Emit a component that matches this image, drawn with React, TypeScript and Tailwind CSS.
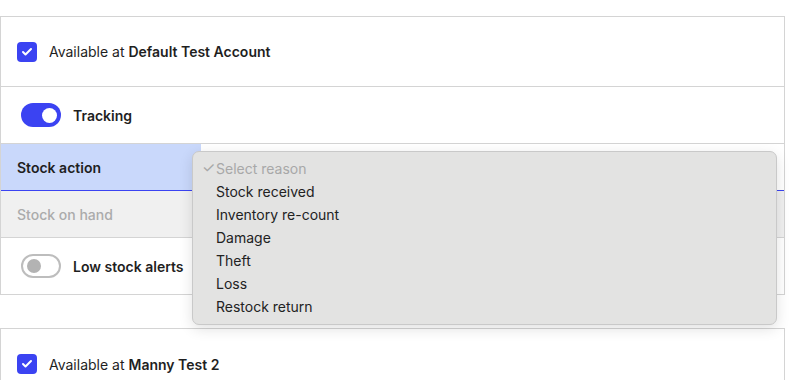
import { Check } from "lucide-react";

function CheckBox() {
  return (
    <span className="flex h-5 w-5 items-center justify-center rounded-[4px] bg-[#3b43f2]">
      <Check className="h-3 w-3 text-white" strokeWidth={4} />
    </span>
  );
}

function Toggle({ on }: { on: boolean }) {
  if (on) {
    return (
      <span className="flex h-6 w-10 items-center justify-end rounded-full bg-[#3b43f2] pr-[4px]">
        <span className="h-[15px] w-[15px] rounded-full bg-white" />
      </span>
    );
  }
  return (
    <span className="flex h-6 w-10 items-center rounded-full border-2 border-[#bdbdbd] bg-white pl-[4px]">
      <span className="h-[14px] w-[14px] rounded-full bg-[#b3b3b3]" />
    </span>
  );
}

const reasons = ["Stock received", "Inventory re-count", "Damage", "Theft", "Loss", "Restock return"];

export default function App() {
  return (
    <div className="relative h-[380px] w-[799px] overflow-hidden bg-white pt-4 text-[14px] text-[#1f1f1f] [font-family:Inter,'Noto_Sans',sans-serif]">
      <div className="w-[785px] border border-[#d4d4d4]">
        <div className="flex h-[70px] items-center gap-3 border-b border-[#d4d4d4] pl-[16px]">
          <CheckBox />
          <span>
            Available at <span className="font-semibold">Default Test Account</span>
          </span>
        </div>
        <div className="flex h-[57px] items-center gap-3 border-b border-[#d4d4d4] pl-[20px]">
          <Toggle on />
          <span className="font-semibold">Tracking</span>
        </div>
        <div className="flex h-[47px] border-b border-[#3b43f2]">
          <div className="flex w-[200px] items-center bg-[#c9d8fb] pl-[16px] font-semibold">Stock action</div>
          <div className="flex-1 bg-white" />
        </div>
        <div className="flex h-[47px] items-center border-b border-[#d4d4d4] bg-[#f0f0f0] pl-[16px] font-medium text-[#ababab]">
          Stock on hand
        </div>
        <div className="flex h-[56px] items-center gap-3 pl-[20px]">
          <Toggle on={false} />
          <span className="font-semibold">Low stock alerts</span>
        </div>
      </div>
      <div className="mt-[33px] h-[80px] w-[785px] border border-[#d4d4d4]">
        <div className="flex h-[70px] items-center gap-3 pl-[16px]">
          <CheckBox />
          <span>
            Available at <span className="font-semibold">Manny Test 2</span>
          </span>
        </div>
      </div>

      <div className="absolute left-[192px] top-[151px] w-[585px] rounded-[7px] border border-[#c9c9c9] bg-[#e3e3e2] pb-[6px] pt-[5px] shadow-[0_4px_14px_rgba(0,0,0,0.12)]">
        <div className="flex h-[23px] items-center text-[#a8a8a8]">
          <span className="w-[23px] pl-[9px] text-[15px]">✓</span>
          <span>Select reason</span>
        </div>
        {reasons.map((r) => (
          <div key={r} className="flex h-[23px] items-center pl-[23px] text-[#222]">
            {r}
          </div>
        ))}
      </div>
    </div>
  );
}
